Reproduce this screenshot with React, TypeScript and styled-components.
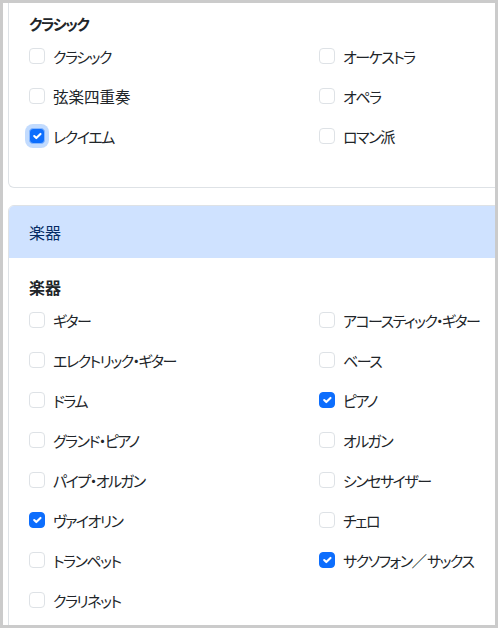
import React from "react";
import styled, { createGlobalStyle, css } from "styled-components";

const Global = createGlobalStyle`
  html, body { margin: 0; padding: 0; background: #fff; }
  body {
    font-family: "Noto Sans CJK JP", "Noto Sans", sans-serif;
    color: #212529;
    font-size: 16px;
  }
`;

const Frame = styled.div`
  width: 498px;
  height: 628px;
  box-sizing: border-box;
  border: 3px solid #cbcbcb;
  overflow: hidden;
  background: #fff;
`;

const Stack = styled.div`
  display: flex;
  flex-direction: column;
  gap: 17px;
  padding-left: 5px;
  width: 640px;
`;

const Card = styled.section<{ $cut?: boolean }>`
  border: 1px solid #dee2e6;
  border-radius: 6px;
  background: #fff;
  overflow: hidden;
  ${(p) =>
    p.$cut &&
    css`
      border-top: none;
      border-top-left-radius: 0;
      border-top-right-radius: 0;
    `}
`;

const Header = styled.div`
  background: #cfe2ff;
  color: #052c65;
  padding: 14px 20px;
  height: 24px;
  line-height: 24px;
  font-size: 16px;
  font-feature-settings: "palt";
`;

const Body = styled.div<{ $top: number; $bottom: number }>`
  padding: ${(p) => p.$top}px 20px ${(p) => p.$bottom}px;
`;

const Title = styled.h6`
  margin: 0 0 9px;
  height: 24px;
  font-size: 16px;
  font-weight: 700;
  line-height: 24px;
  font-feature-settings: "palt";
`;

const Grid = styled.div`
  display: grid;
  grid-template-columns: 290px 290px;
  row-gap: 16px;
`;

const Option = styled.label`
  display: flex;
  align-items: center;
  gap: 8px;
  height: 24px;
  line-height: 24px;
  font-size: 15.5px;
  font-feature-settings: "palt";
  cursor: pointer;
`;

const Kana = styled.span`
  font-size: 15px;
  line-height: 1;
  letter-spacing: -1.5px;
`;

const Box = styled.span<{ $checked: boolean; $focus?: boolean }>`
  width: 16px;
  height: 16px;
  box-sizing: border-box;
  border-radius: 4px;
  border: 1px solid ${(p) => (p.$checked ? "#0d6efd" : "#dee2e6")};
  background: ${(p) => (p.$checked ? "#0d6efd" : "#fff")};
  display: flex;
  align-items: center;
  justify-content: center;
  flex-shrink: 0;
  ${(p) =>
    p.$focus &&
    css`
      border-color: #86b7fe;
      box-shadow: 0 0 0 4px rgba(13, 110, 253, 0.25);
    `}
`;

const KANA = /([\u30A0-\u30FF・]+)/;

const Text = ({ children }: { children: string }) => {
  const parts = children.split(KANA).filter(Boolean);
  return (
    <span>
      {parts.map((p, i) =>
        /^[\u30A0-\u30FF・]+$/.test(p) ? (
          <Kana key={i}>{p}</Kana>
        ) : (
          <React.Fragment key={i}>{p}</React.Fragment>
        )
      )}
    </span>
  );
};

type Item = { label: string; checked?: boolean; focus?: boolean };

const Check = ({ item }: { item: Item }) => (
  <Option>
    <Box $checked={!!item.checked} $focus={item.focus}>
      {item.checked && (
        <svg width="16" height="16" viewBox="0 0 20 20">
          <path
            d="m6 10 3 3 6-6"
            fill="none"
            stroke="#fff"
            strokeWidth="3"
            strokeLinecap="round"
            strokeLinejoin="round"
          />
        </svg>
      )}
    </Box>
    <Text>{item.label}</Text>
  </Option>
);

const classic: Item[] = [
  { label: "クラシック" },
  { label: "オーケストラ" },
  { label: "弦楽四重奏" },
  { label: "オペラ" },
  { label: "レクイエム", checked: true, focus: true },
  { label: "ロマン派" },
];

const instruments: Item[] = [
  { label: "ギター" },
  { label: "アコースティック・ギター" },
  { label: "エレクトリック・ギター" },
  { label: "ベース" },
  { label: "ドラム" },
  { label: "ピアノ", checked: true },
  { label: "グランド・ピアノ" },
  { label: "オルガン" },
  { label: "パイプ・オルガン" },
  { label: "シンセサイザー" },
  { label: "ヴァイオリン", checked: true },
  { label: "チェロ" },
  { label: "トランペット" },
  { label: "サクソフォン／サックス", checked: true },
  { label: "クラリネット" },
];

export default function App() {
  return (
    <>
      <Global />
      <Frame>
        <Stack>
          <Card $cut>
            <Body $top={8} $bottom={39}>
              <Title>
                <Text>クラシック</Text>
              </Title>
              <Grid>
                {classic.map((it) => (
                  <Check key={it.label} item={it} />
                ))}
              </Grid>
            </Body>
          </Card>
          <Card>
            <Header>楽器</Header>
            <Body $top={17} $bottom={20}>
              <Title>楽器</Title>
              <Grid>
                {instruments.map((it) => (
                  <Check key={it.label} item={it} />
                ))}
              </Grid>
            </Body>
          </Card>
        </Stack>
      </Frame>
    </>
  );
}
